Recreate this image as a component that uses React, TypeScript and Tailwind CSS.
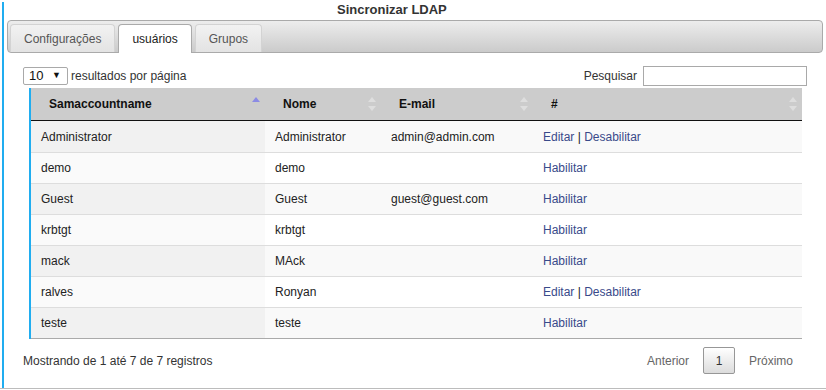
import React from 'react';

type User = { login: string; name: string; email: string; active: boolean };

const users: User[] = [
  { login: 'Administrator', name: 'Administrator', email: 'admin@admin.com', active: true },
  { login: 'demo', name: 'demo', email: '', active: false },
  { login: 'Guest', name: 'Guest', email: 'guest@guest.com', active: false },
  { login: 'krbtgt', name: 'krbtgt', email: '', active: false },
  { login: 'mack', name: 'MAck', email: '', active: false },
  { login: 'ralves', name: 'Ronyan', email: '', active: true },
  { login: 'teste', name: 'teste', email: '', active: false },
];

const SortIcon: React.FC<{ asc?: boolean }> = ({ asc }) => (
  <svg width="8" height="14" viewBox="0 0 8 14">
    <polygon points="4,0 8,5 0,5" fill={asc ? '#8b8be4' : '#dedede'} />
    {!asc && <polygon points="0,9 8,9 4,14" fill="#dedede" />}
  </svg>
);

const cols = ['w-[234px]', 'w-[116px]', 'w-[152px]', 'w-[269px]'];

const App: React.FC = () => {
  const tabs = ['Configurações', 'usuários', 'Grupos'];

  return (
    <div className="w-[826px] h-[390px] bg-white pt-[2px] overflow-hidden font-['Liberation_Sans',Arial,sans-serif] text-[12px] text-[#333]">
      <div className="border-b border-[#bcbcbc]">
        <div className="ml-[2px] h-[386px] border-l-2 border-[#20adf0]">
          {/* Title */}
          <div className="h-[16px] leading-[16px] pl-[333px] text-[13px] font-bold text-[#333]">
            Sincronizar LDAP
          </div>

          {/* Tabs */}
          <div className="mt-[2px] mx-[3px] h-[33px] flex items-end gap-[3px] border border-[#aaa] rounded-[4px] bg-linear-to-b from-[#ededed] to-[#cbcbcb] px-[2px] pt-[3px]">
            {tabs.map((t, i) =>
              i === 1 ? (
                <div
                  key={t}
                  className="h-[29px] -mb-px flex items-center px-[13px] border border-b-0 border-[#aaa] rounded-t-[4px] bg-white text-[#212121]"
                >
                  {t}
                </div>
              ) : (
                <div
                  key={t}
                  className="h-[28px] flex items-center px-[13px] border border-b-0 border-[#d3d3d3] rounded-t-[4px] bg-linear-to-b from-[#f2f2f2] to-[#e3e3e3] text-[#555]"
                >
                  {t}
                </div>
              )
            )}
          </div>

          {/* Controls */}
          <div className="mt-[13px] mx-[19px] h-[20px] flex items-center justify-between">
            <div className="flex items-center">
              <div className="w-[45px] h-[18px] flex items-center justify-between border border-[#a9a9a9] rounded-[2px] pl-[5px] pr-[6px] text-[13px] text-[#111]">
                <span>10</span>
                <span className="text-[9px]">▼</span>
              </div>
              <span className="ml-[3px]">resultados por página</span>
            </div>
            <div className="flex items-center">
              <span>Pesquisar</span>
              <input className="ml-[6px] w-[164px] h-[20px] border border-[#a9a9a9] outline-none px-1" />
            </div>
          </div>

          {/* Table */}
          <div className="mt-[2px] ml-[25px] mr-[24px] border-l-2 border-[#20adf0]">
            <div className="h-[33px] flex bg-[#cccccc] border-b border-[#111] font-bold text-[#111]">
              {['Samaccountname', 'Nome', 'E-mail', '#'].map((h, i) => (
                <div key={h} className={`${cols[i]} flex items-center justify-between pl-[18px] pr-[5px]`}>
                  <span>{h}</span>
                  <SortIcon asc={i === 0} />
                </div>
              ))}
            </div>
            <div className="border-b border-[#aaa]">
              {users.map((u, r) => {
                const odd = r % 2 === 0;
                return (
                  <div
                    key={u.login}
                    className={`flex text-[#222] ${r === 0 ? 'h-[31px]' : 'h-[31px] border-t border-[#ddd]'} ${odd ? 'bg-[#f9f9f9]' : 'bg-white'}`}
                  >
                    <div className={`${cols[0]} flex items-center pl-[10px] ${odd ? 'bg-[#f1f1f1]' : 'bg-[#fafafa]'}`}>
                      {u.login}
                    </div>
                    <div className={`${cols[1]} flex items-center pl-[10px]`}>{u.name}</div>
                    <div className={`${cols[2]} flex items-center pl-[10px]`}>{u.email}</div>
                    <div className={`${cols[3]} flex items-center pl-[10px]`}>
                      {u.active ? (
                        <span>
                          <span className="text-[#394a8a]">Editar</span>
                          <span className="text-[#222]"> | </span>
                          <span className="text-[#394a8a]">Desabilitar</span>
                        </span>
                      ) : (
                        <span className="text-[#394a8a]">Habilitar</span>
                      )}
                    </div>
                  </div>
                );
              })}
            </div>
          </div>

          {/* Footer */}
          <div className="mt-[8px] ml-[19px] mr-[21px] flex items-center justify-between">
            <span>Mostrando de 1 até 7 de 7 registros</span>
            <div className="flex items-center">
              <span className="px-3 text-[#666]">Anterior</span>
              <div className="ml-[2px] w-[32px] h-[27px] flex items-center justify-center border border-[#979797] rounded-[2px] bg-linear-to-b from-white to-[#dcdcdc] text-[#333]">
                1
              </div>
              <span className="ml-[2px] px-3 text-[#666]">Próximo</span>
            </div>
          </div>
        </div>
      </div>
    </div>
  );
};

export default App;
